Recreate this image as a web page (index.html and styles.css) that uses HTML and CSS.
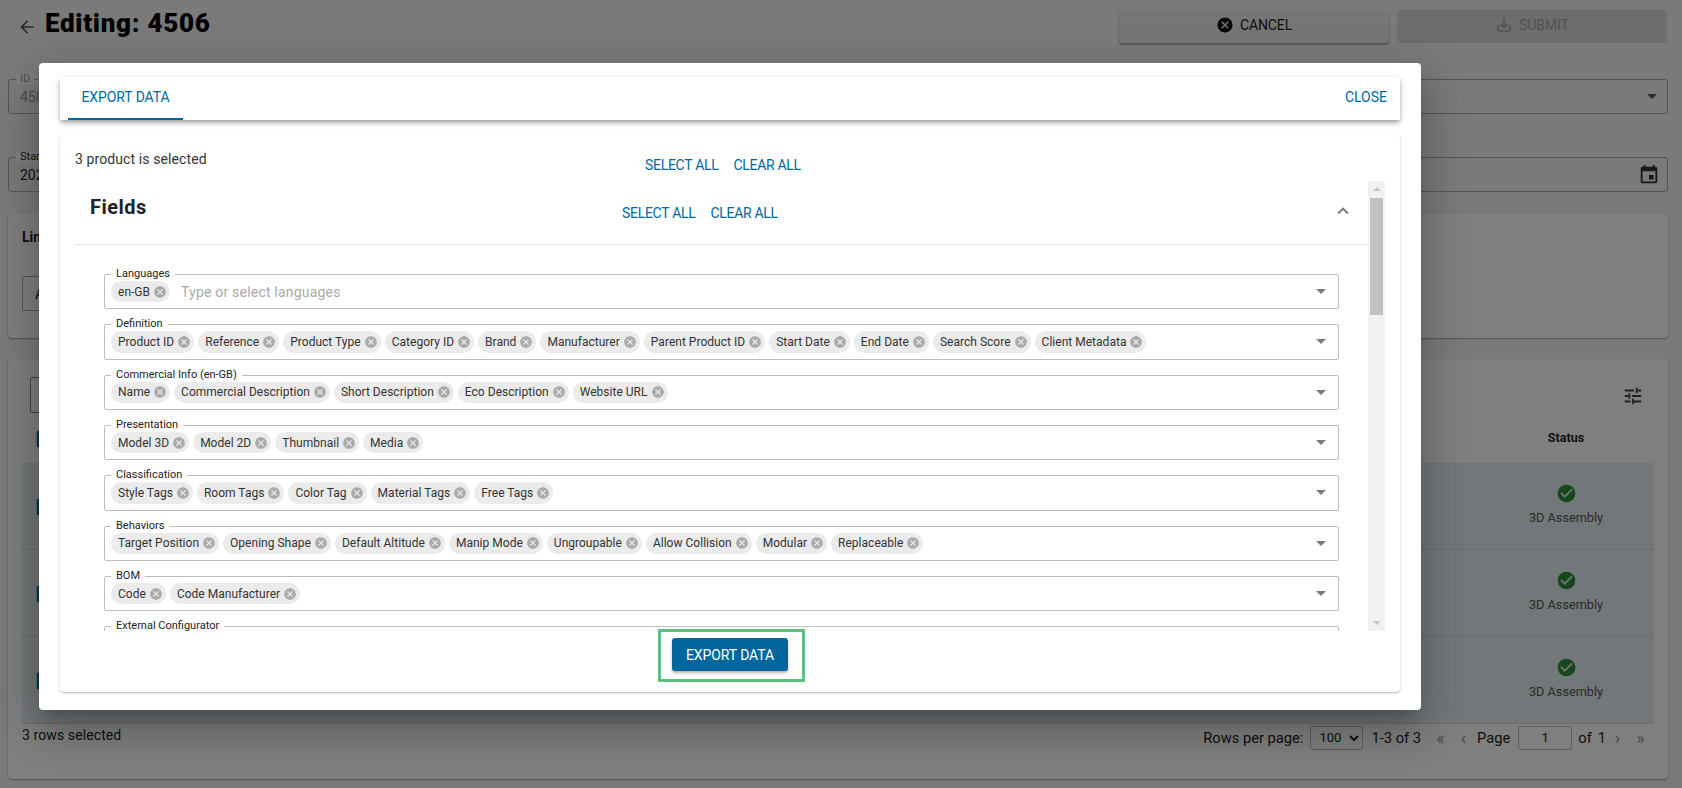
FILE: index.html
```html
<!DOCTYPE html>
<html lang="en">
<head>
<meta charset="utf-8">
<title>Editing: 4506</title>
<link rel="stylesheet" href="styles.css">
</head>
<body>
<svg class="sprite" xmlns="http://www.w3.org/2000/svg">
  <symbol id="i-back" viewBox="0 0 24 24"><path d="M20 11H7.83l5.59-5.59L12 4l-8 8 8 8 1.41-1.41L7.83 13H20v-2z"/></symbol>
  <symbol id="i-cancel" viewBox="0 0 24 24"><path d="M12 2C6.47 2 2 6.47 2 12s4.47 10 10 10 10-4.47 10-10S17.53 2 12 2zm5 13.59L15.59 17 12 13.41 8.41 17 7 15.59 10.59 12 7 8.41 8.41 7 12 10.59 15.59 7 17 8.41 13.41 12 17 15.59z"/></symbol>
  <symbol id="i-save" viewBox="0 0 24 24"><path d="M19 12v7H5v-7H3v7c0 1.1.9 2 2 2h14c1.1 0 2-.9 2-2v-7h-2zm-6 .67l2.59-2.58L17 11.5l-5 5-5-5 1.41-1.41L11 12.67V3h2z"/></symbol>
  <symbol id="i-event" viewBox="0 0 24 24"><path d="M17 12h-5v5h5v-5zM16 1v2H8V1H6v2H5c-1.11 0-1.99.9-1.99 2L3 19c0 1.1.89 2 2 2h14c1.1 0 2-.9 2-2V5c0-1.1-.9-2-2-2h-1V1h-2zm3 18H5V8h14v11z"/></symbol>
  <symbol id="i-less" viewBox="0 0 24 24"><path d="M12 8l-6 6 1.41 1.41L12 10.83l4.59 4.58L18 14z"/></symbol>
  <symbol id="i-tune" viewBox="0 0 24 24"><path d="M3 17v2h6v-2H3zM3 5v2h10V5H3zm10 16v-2h8v-2h-8v-2h-2v6h2zM7 9v2H3v2h4v2h2V9H7zm14 4v-2H11v2h10zm-6-4h2V7h4V5h-4V3h-2v6z"/></symbol>
  <symbol id="i-ok" viewBox="0 0 24 24"><path d="M12 2C6.48 2 2 6.48 2 12s4.48 10 10 10 10-4.48 10-10S17.52 2 12 2zm-2 15l-5-5 1.41-1.41L10 14.17l7.59-7.59L19 8l-9 9z"/></symbol>
  <symbol id="i-box" viewBox="0 0 24 24"><path d="M19 3H5c-1.11 0-2 .9-2 2v14c0 1.1.89 2 2 2h14c1.11 0 2-.9 2-2V5c0-1.1-.89-2-2-2zm-9 14l-5-5 1.41-1.41L10 14.17l7.59-7.59L19 8l-9 9z"/></symbol>
  <symbol id="i-del" viewBox="0 0 24 24"><path d="M12 2C6.47 2 2 6.47 2 12s4.47 10 10 10 10-4.47 10-10S17.53 2 12 2zm5 13.59L15.59 17 12 13.41 8.41 17 7 15.59 10.59 12 7 8.41 8.41 7 12 10.59 15.59 7 17 8.41 13.41 12 17 15.59z"/></symbol>
</svg>

<div class="page">
  <header class="topbar">
    <svg class="back"><use href="#i-back"/></svg>
    <h1 class="title">Editing: 4506</h1>
    <div class="actions">
      <button class="act act-cancel"><svg class="act-ico"><use href="#i-cancel"/></svg>CANCEL</button>
      <button class="act act-submit"><svg class="act-ico"><use href="#i-save"/></svg>SUBMIT</button>
    </div>
  </header>

  <div class="form-row">
    <div class="bg-field"><span class="bg-label">ID</span><span class="bg-value muted">4506</span></div>
    <div class="bg-field bg-end"><span class="caret dark"></span></div>
  </div>
  <div class="form-row second">
    <div class="bg-field"><span class="bg-label dark-label">Start Date</span><span class="bg-value">2024</span></div>
    <div class="bg-field bg-end"><svg class="cal"><use href="#i-event"/></svg></div>
  </div>

  <section class="sheet sheet-one">
    <h2 class="sheet-title">Linked</h2>
    <div class="mini-field">All</div>
  </section>

  <section class="sheet sheet-two">
    <div class="toolbar">
      <div class="search"></div>
      <svg class="tune"><use href="#i-tune"/></svg>
    </div>
    <div class="t-row t-head">
      <svg class="tick"><use href="#i-box"/></svg>
      <div class="status-head">Status</div>
    </div>
    <div class="t-row t-sel">
      <svg class="tick"><use href="#i-box"/></svg>
      <div class="status"><svg class="ok"><use href="#i-ok"/></svg><span>3D Assembly</span></div>
    </div>
    <div class="t-row t-sel">
      <svg class="tick"><use href="#i-box"/></svg>
      <div class="status"><svg class="ok"><use href="#i-ok"/></svg><span>3D Assembly</span></div>
    </div>
    <div class="t-row t-sel">
      <svg class="tick"><use href="#i-box"/></svg>
      <div class="status"><svg class="ok"><use href="#i-ok"/></svg><span>3D Assembly</span></div>
    </div>
    <div class="t-foot">
      <span class="selected">3 rows selected</span>
      <div class="pager">
        <span>Rows per page:</span>
        <select class="per"><option>100</option></select>
        <span class="range">1-3 of 3</span>
        <span class="nav nav-first">«</span>
        <span class="nav nav-prev">‹</span>
        <span>Page</span>
        <input class="pg" value="1">
        <span class="of">of</span>
        <span>1</span>
        <span class="nav nav-next">›</span>
        <span class="nav nav-last">»</span>
      </div>
    </div>
  </section>
</div>

<div class="overlay"></div>

<div class="modal">
  <div class="tabs">
    <div class="tab">EXPORT DATA</div>
    <button class="link close">CLOSE</button>
  </div>
  <div class="card">
    <div class="card-top">
      <div class="count">3 product is selected</div>
      <div class="links"><button class="link">SELECT ALL</button><button class="link">CLEAR ALL</button></div>
    </div>
    <div class="scroll-wrap">
      <div class="scroll-body">
        <div class="acc-head">
          <h3 class="acc-title">Fields</h3>
          <div class="links"><button class="link">SELECT ALL</button><button class="link">CLEAR ALL</button></div>
          <svg class="chev"><use href="#i-less"/></svg>
        </div>
        <div class="fields">
          <div class="field"><span class="f-label">Languages</span>
            <div class="chips">
              <span class="chip">en-GB<svg class="x"><use href="#i-del"/></svg></span>
              <span class="ph">Type or select languages</span>
            </div><span class="caret"></span></div>
          <div class="field"><span class="f-label">Definition</span>
            <div class="chips">
              <span class="chip">Product ID<svg class="x"><use href="#i-del"/></svg></span>
              <span class="chip">Reference<svg class="x"><use href="#i-del"/></svg></span>
              <span class="chip">Product Type<svg class="x"><use href="#i-del"/></svg></span>
              <span class="chip">Category ID<svg class="x"><use href="#i-del"/></svg></span>
              <span class="chip">Brand<svg class="x"><use href="#i-del"/></svg></span>
              <span class="chip">Manufacturer<svg class="x"><use href="#i-del"/></svg></span>
              <span class="chip">Parent Product ID<svg class="x"><use href="#i-del"/></svg></span>
              <span class="chip">Start Date<svg class="x"><use href="#i-del"/></svg></span>
              <span class="chip">End Date<svg class="x"><use href="#i-del"/></svg></span>
              <span class="chip">Search Score<svg class="x"><use href="#i-del"/></svg></span>
              <span class="chip">Client Metadata<svg class="x"><use href="#i-del"/></svg></span>
            </div><span class="caret"></span></div>
          <div class="field"><span class="f-label">Commercial Info (en-GB)</span>
            <div class="chips">
              <span class="chip">Name<svg class="x"><use href="#i-del"/></svg></span>
              <span class="chip">Commercial Description<svg class="x"><use href="#i-del"/></svg></span>
              <span class="chip">Short Description<svg class="x"><use href="#i-del"/></svg></span>
              <span class="chip">Eco Description<svg class="x"><use href="#i-del"/></svg></span>
              <span class="chip">Website URL<svg class="x"><use href="#i-del"/></svg></span>
            </div><span class="caret"></span></div>
          <div class="field"><span class="f-label">Presentation</span>
            <div class="chips">
              <span class="chip">Model 3D<svg class="x"><use href="#i-del"/></svg></span>
              <span class="chip">Model 2D<svg class="x"><use href="#i-del"/></svg></span>
              <span class="chip">Thumbnail<svg class="x"><use href="#i-del"/></svg></span>
              <span class="chip">Media<svg class="x"><use href="#i-del"/></svg></span>
            </div><span class="caret"></span></div>
          <div class="field"><span class="f-label">Classification</span>
            <div class="chips">
              <span class="chip">Style Tags<svg class="x"><use href="#i-del"/></svg></span>
              <span class="chip">Room Tags<svg class="x"><use href="#i-del"/></svg></span>
              <span class="chip">Color Tag<svg class="x"><use href="#i-del"/></svg></span>
              <span class="chip">Material Tags<svg class="x"><use href="#i-del"/></svg></span>
              <span class="chip">Free Tags<svg class="x"><use href="#i-del"/></svg></span>
            </div><span class="caret"></span></div>
          <div class="field"><span class="f-label">Behaviors</span>
            <div class="chips">
              <span class="chip">Target Position<svg class="x"><use href="#i-del"/></svg></span>
              <span class="chip">Opening Shape<svg class="x"><use href="#i-del"/></svg></span>
              <span class="chip">Default Altitude<svg class="x"><use href="#i-del"/></svg></span>
              <span class="chip">Manip Mode<svg class="x"><use href="#i-del"/></svg></span>
              <span class="chip">Ungroupable<svg class="x"><use href="#i-del"/></svg></span>
              <span class="chip">Allow Collision<svg class="x"><use href="#i-del"/></svg></span>
              <span class="chip">Modular<svg class="x"><use href="#i-del"/></svg></span>
              <span class="chip">Replaceable<svg class="x"><use href="#i-del"/></svg></span>
            </div><span class="caret"></span></div>
          <div class="field"><span class="f-label">BOM</span>
            <div class="chips">
              <span class="chip">Code<svg class="x"><use href="#i-del"/></svg></span>
              <span class="chip">Code Manufacturer<svg class="x"><use href="#i-del"/></svg></span>
            </div><span class="caret"></span></div>
          <div class="field"><span class="f-label">External Configurator</span></div>
        </div>
      </div>
      <div class="sbar">
        <span class="sb-up"></span>
        <span class="sb-thumb"></span>
        <span class="sb-down"></span>
      </div>
    </div>
    <div class="card-foot">
      <div class="export-wrap"><button class="export">EXPORT DATA</button></div>
    </div>
  </div>
</div>
</body>
</html>
```
FILE: styles.css
```css
* { box-sizing: border-box; }
html, body { margin: 0; height: 788px; overflow: hidden; }
body { font-family: Roboto, "Liberation Sans", sans-serif; font-size: 14px; color: #222; background: #f4f4f4; position: relative; }
.sprite { display: none; }
button { font: inherit; border: 0; background: none; padding: 0; cursor: pointer; }
h1, h2, h3 { margin: 0; }

/* background page */
.page { padding: 10px 14px 0 8px; height: 788px; }
.topbar { display: flex; align-items: center; height: 33px; }
.back { width: 20px; height: 20px; margin: 1px 8px 0 9px; fill: #555; flex: none; }
.title { font-size: 26px; font-weight: 900; color: #000; line-height: 28px; margin-top: -7px; letter-spacing: .7px; }
.actions { margin-left: auto; display: flex; gap: 8px; margin-right: 1px; }
.act { width: 270px; height: 33px; border-radius: 4px; display: flex; align-items: center; justify-content: center; font-size: 14px; gap: 6px; padding-bottom: 3px; letter-spacing: -.1px; }
.act-ico { width: 18px; height: 18px; flex: none; }
.act-cancel { background: #ececec; color: #222; box-shadow: 0 2px 2px rgba(0,0,0,.3); fill: #111; }
.act-submit { background: #dadada; color: #a4a4a4; fill: #a4a4a4; }

.form-row { display: grid; grid-template-columns: 1fr 1fr; gap: 8px; margin-top: 36px; }
.form-row.second { margin-top: 43px; }
.bg-field { position: relative; height: 35px; border: 1px solid #aaa; border-radius: 3px; padding: 8px 11px; font-size: 14px; line-height: 18px; }
.bg-end { display: flex; justify-content: flex-end; align-items: center; padding-right: 9px; }
.bg-label { position: absolute; left: 7px; top: -7px; font-size: 11px; line-height: 12px; padding: 0 4px; background: #fff; color: #222; }
.bg-label:first-child { color: #999; }
.dark-label.bg-label { color: #222; }
.bg-value { color: #222; }
.bg-value.muted { color: #999; }
.cal { width: 22px; height: 22px; fill: #333; margin-right: -2px; }
.caret { width: 0; height: 0; border-left: 5px solid transparent; border-right: 5px solid transparent; border-top: 5px solid #7b7b7b; }
.caret.dark { border-top-color: #555; margin-right: 1px; }

.sheet { background: #fff; border-radius: 4px; box-shadow: 0 1px 2px rgba(0,0,0,.35); }
.sheet-one { height: 124px; margin-top: 22px; padding: 14px 14px 0; }
.sheet-title { font-size: 14px; font-weight: 700; line-height: 18px; }
.mini-field { margin-top: 30px; height: 35px; width: 300px; border: 1px solid #aaa; border-radius: 2px; padding: 8px 12px; line-height: 18px; }
.sheet-two { height: 420px; margin-top: 21px; padding: 18px 14px 0; }
.toolbar { display: flex; align-items: flex-start; justify-content: space-between; height: 36px; padding: 0 10px 0 8px; }
.search { width: 300px; height: 36px; border: 1px solid #888; border-radius: 2px; }
.tune { width: 22px; height: 22px; fill: #444; margin-top: 8px; }
.t-row { display: flex; align-items: center; justify-content: space-between; padding-left: 12px; }
.t-head { height: 50px; }
.t-sel { height: 87px; background: #e4eef2; border-bottom: 1px solid #d5dde0; }
.t-sel:last-of-type { border-bottom: 0; }
.tick { width: 22px; height: 22px; fill: #00689d; margin-top: 2px; }
.status-head { width: 176px; text-align: center; font-weight: 700; font-size: 12.5px; color: #222; padding-bottom: 2px; }
.status { width: 176px; display: flex; flex-direction: column; align-items: center; font-size: 12.7px; color: #555; gap: 6px; margin-top: -4px; }
.ok { width: 21px; height: 21px; fill: #2f8f38; }
.t-foot { display: flex; justify-content: space-between; align-items: center; height: 26px; }
.selected { margin-top: -4px; letter-spacing: .1px; }
.pager { display: flex; align-items: center; gap: 8px; padding-right: 6px; margin-top: 1px; font-size: 14.7px; }
.per { width: 53px; height: 24px; font: 13px Roboto, sans-serif; border: 1px solid #bbb; border-radius: 3px; background: #fff; color: #222; padding: 0 4px; margin-left: -1px; }
.range { margin-right: 4px; }
.nav { color: #999; font-size: 18px; width: 15px; text-align: center; }
.nav-prev { margin-right: -2px; }
.nav-next { margin-left: -4px; }
.of { margin-left: -2px; margin-right: -2px; }
.pg { width: 54px; height: 24px; border: 1px solid #bbb; border-radius: 3px; text-align: center; font: 13px Roboto, sans-serif; color: #222; padding: 0; }

.overlay { position: absolute; inset: 0; background: rgba(0,0,0,.5); }

/* modal */
.modal { position: absolute; left: 39px; top: 63px; width: 1382px; height: 647px; background: #fff; border-radius: 4px; padding: 14px 21px 18px; display: flex; flex-direction: column; gap: 15px; box-shadow: 0 11px 15px -7px rgba(0,0,0,.2), 0 24px 38px 3px rgba(0,0,0,.14), 0 9px 46px 8px rgba(0,0,0,.12); }
.tabs { height: 43px; flex: none; display: flex; justify-content: space-between; align-items: center; padding: 0 13px 0 8px; box-shadow: 0 2px 4px -1px rgba(0,0,0,.3), 0 4px 5px rgba(0,0,0,.14), 0 1px 10px rgba(0,0,0,.08); }
.tab { width: 115px; height: 43px; border-bottom: 2px solid #00689d; color: #00689d; font-size: 14px; line-height: 40px; text-align: center; letter-spacing: -.1px; }
.link { color: #00689d; font-size: 14px; line-height: 18px; white-space: nowrap; letter-spacing: -.3px; }
.close { margin-top: -3px; letter-spacing: 0; }
.card { flex: 1; min-height: 0; display: flex; flex-direction: column; border-radius: 4px; box-shadow: 0 1px 2px rgba(0,0,0,.3); padding: 0 15px; }
.card-top { height: 46px; flex: none; display: grid; grid-template-columns: 570px auto; }
.count { margin-top: 16px; line-height: 16px; font-size: 14px; color: #333; letter-spacing: .1px; }
.links { display: flex; gap: 15px; }
.card-top .links { margin-top: 13px; }
.scroll-wrap { height: 450px; flex: none; display: flex; }
.scroll-body { flex: 1; min-width: 0; overflow: hidden; }
.acc-head { height: 64px; display: grid; grid-template-columns: 532px auto 1fr; align-items: center; border-bottom: 1px solid #e2e2e2; padding: 0 0 0 15px; }
.acc-title { font-size: 20px; font-weight: 700; line-height: 24px; color: #222; margin-top: -12px; letter-spacing: .5px; }
.acc-head .links { margin-top: 0; }
.chev { width: 22px; height: 22px; fill: #777; justify-self: end; margin: -4px 14px 0 0; }
.fields { padding: 29px 29.5px 0 29px; display: flex; flex-direction: column; gap: 15px; }
.field { position: relative; height: 35.33px; flex: none; border: 1px solid #bdbdbd; border-radius: 2px; display: flex; align-items: center; padding: 0 12px 0 6px; }
.f-label { position: absolute; left: 6px; top: -7px; font-size: 11px; line-height: 12px; padding: 0 5px; background: #fff; color: #222; white-space: nowrap; }
.chips { flex: 1; display: flex; gap: 4px; align-items: center; }
.chip { height: 21.6px; border-radius: 11px; background: #ebebeb; display: inline-flex; align-items: center; padding-left: 7px; font-size: 12px; color: #333; white-space: nowrap; letter-spacing: .02px; }
.x { width: 14px; height: 14px; fill: #aaa; margin: 0 3px 0 3px; }
.ph { color: #aaa; font-size: 14px; margin-left: 7px; letter-spacing: .2px; }
.sbar { width: 17px; flex: none; background: #f1f1f1; display: flex; flex-direction: column; align-items: center; }
.sb-up { width: 0; height: 0; margin-top: 6px; border-left: 4px solid transparent; border-right: 4px solid transparent; border-bottom: 4px solid #c4c4c4; }
.sb-thumb { width: 13px; height: 117px; margin-top: 7px; background: #c1c1c1; }
.sb-down { width: 0; height: 0; margin-top: auto; margin-bottom: 6px; border-left: 4px solid transparent; border-right: 4px solid transparent; border-top: 4px solid #c4c4c4; }
.card-foot { flex: 1; display: flex; justify-content: center; padding-top: 7px; }
.export-wrap { position: relative; height: 33px; }
.export-wrap::after { content: ""; position: absolute; left: -14px; right: -17px; top: -9px; bottom: -11px; border: 3px solid #5cc17a; pointer-events: none; }
.export { width: 116px; height: 33px; border-radius: 3px; background: #00669b; color: #fff; font-size: 14px; box-shadow: 0 2px 3px rgba(0,0,0,.3); letter-spacing: -.1px; }
```
